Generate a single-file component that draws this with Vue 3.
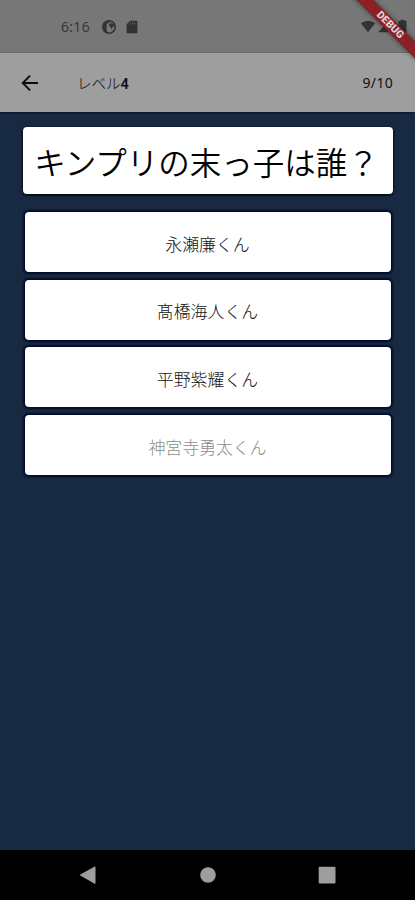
<template>
    <div class="screen">
        <!-- 端末のステータスバー -->
        <div class="status">
            <span class="time">6:16</span>
            <svg class="app-icon" width="16" height="16" viewBox="0 0 16 16">
                <circle cx="8" cy="8" r="6.2" fill="none" stroke="#333" stroke-width="1.6" />
                <path d="M2 8V4.5L5 2h4L7.5 4.5H5.6V11l1.2 3-3-1.5Z" fill="#333" />
                <path d="M8.2 5.2 10 4l2.6 1 .8 2.4-2 .2v1.8l-1.6.4-.2-2.4H8.2Z" fill="#333" />
            </svg>
            <svg class="sd-icon" width="12" height="14" viewBox="0 0 12 14">
                <path d="M4.2.7h6.2q1 0 1 1v10.6q0 1-1 1H1.6q-1 0-1-1V4.3Z" fill="#333" />
                <path d="M4.2 2.5v2M6.4 2.5v2M8.6 2.5v2" stroke="#666" stroke-width=".9" />
            </svg>
            <svg class="signals" width="48" height="16" viewBox="0 0 48 16">
                <path d="M.8 4.3Q8-1 15.2 4.3L8 13.2Z" fill="#333" />
                <path d="M18 13.2 30 1v12.2Z" fill="#333" />
                <path d="M38.5 2h2V.8h4V2h2v11.6h-8Z" fill="#333" />
            </svg>
        </div>

        <header class="appbar">
            <svg class="back" width="18" height="18" viewBox="0 0 18 18">
                <path d="M17 9H2M9.1 1.6 1.7 9l7.4 7.4" fill="none" stroke="#0c0c0c" stroke-width="1.9" />
            </svg>
            <div class="title">レベル<b>4</b></div>
            <div class="count">{{ current }}/{{ total }}</div>
        </header>

        <main class="quiz">
            <div class="question">{{ question }}</div>
            <div class="answers">
                <button
                    v-for="answer in answers"
                    :key="answer"
                    class="answer"
                    :class="{ selected: answer === selected }"
                    @click="selected = answer"
                >{{ answer }}</button>
            </div>
        </main>

        <!-- ナビゲーションバー -->
        <nav class="navbar">
            <svg width="18" height="18" viewBox="0 0 18 18">
                <path d="M1.3 9 16 .9v16.5Z" fill="#9e9e9e" stroke="#9e9e9e" stroke-linejoin="round" />
            </svg>
            <svg width="18" height="18" viewBox="0 0 18 18">
                <circle cx="9" cy="9" r="7.8" fill="#9e9e9e" />
            </svg>
            <svg width="18" height="18" viewBox="0 0 18 18">
                <rect x=".7" y=".8" width="16.8" height="16.6" rx="1" fill="#9e9e9e" />
            </svg>
        </nav>

        <div class="debug">DEBUG</div>
    </div>
</template>

<script setup>
import { ref } from 'vue';

// 現在の問題番号と問題数
const current = ref(9);
const total = 10;

const question = 'キンプリの末っ子は誰？';
const answers = ['永瀬廉くん', '髙橋海人くん', '平野紫耀くん', '神宮寺勇太くん'];

// 選択済みの回答
const selected = ref('神宮寺勇太くん');
</script>

<style>
body {
    margin: 0;
    background: #182a42;
}
</style>

<style scoped>
.screen {
    position: relative;
    display: flex;
    flex-direction: column;
    width: 415px;
    height: 900px;
    overflow: hidden;
    background: #182a42;
    color: #111;
    font-family: Roboto, "Noto Sans CJK JP", sans-serif;
}

.status {
    display: flex;
    align-items: center;
    box-sizing: border-box;
    height: 53px;
    padding: 1px 7px 0 61px;
    background: #777;
}

.time {
    width: 40px;
    color: #373737;
    font-family: "Noto Sans", sans-serif;
    font-size: 14px;
    line-height: 20px;
    letter-spacing: 0.3px;
}

.sd-icon {
    margin-left: 9px;
}

.signals {
    margin-left: auto;
}

.appbar {
    display: flex;
    align-items: center;
    box-sizing: border-box;
    height: 59px;
    padding: 0 21px;
    background: #9e9e9e;
    box-shadow: 0 1px 2px #06142c;
}

.title {
    margin-left: 38px;
    padding-top: 4px;
    font-size: 14.5px;
    line-height: 20px;
    font-weight: 300;
}

.title b {
    font-weight: 600;
}

.count {
    margin-left: auto;
    padding-right: 1px;
    font-family: "Noto Sans", sans-serif;
    font-size: 14px;
    letter-spacing: 0.3px;
}

.quiz {
    flex: 1;
    padding: 15px 22px 0 23px;
}

.question {
    height: 67px;
    box-sizing: border-box;
    padding-right: 3px;
    border-radius: 4px;
    background: #fff;
    box-shadow: 0 1px 2px 1px #020b1c;
    color: #000;
    font-family: "Noto Sans CJK JP", sans-serif;
    font-size: 31.5px;
    font-weight: 350;
    line-height: 69px;
    text-align: center;
    white-space: nowrap;
}

.answers {
    display: flex;
    flex-direction: column;
    gap: 7.7px;
    padding: 18px 2px 0;
}

.answer {
    height: 60px;
    padding: 2px 1px 0 0;
    border: 0;
    border-radius: 4px;
    background: #fff;
    box-shadow: 0 0 2px 1.5px #030b2b;
    color: #111;
    font-family: "Noto Sans CJK JP", sans-serif;
    font-size: 16.9px;
    font-weight: 300;
}

.answer.selected {
    color: #8c8c8c;
}

.navbar {
    display: flex;
    justify-content: space-between;
    align-items: center;
    box-sizing: border-box;
    height: 50px;
    padding: 1px 79px;
    background: #000;
}

/* 右上の斜めリボン */
.debug {
    position: absolute;
    top: 19px;
    right: -36px;
    width: 122px;
    height: 12px;
    background: #8b2127;
    box-shadow: 0 0 5px rgba(0, 0, 0, 0.5);
    color: #ddd0d0;
    font-size: 10.5px;
    font-weight: 900;
    line-height: 12px;
    text-align: center;
    transform: rotate(45deg);
}
</style>
